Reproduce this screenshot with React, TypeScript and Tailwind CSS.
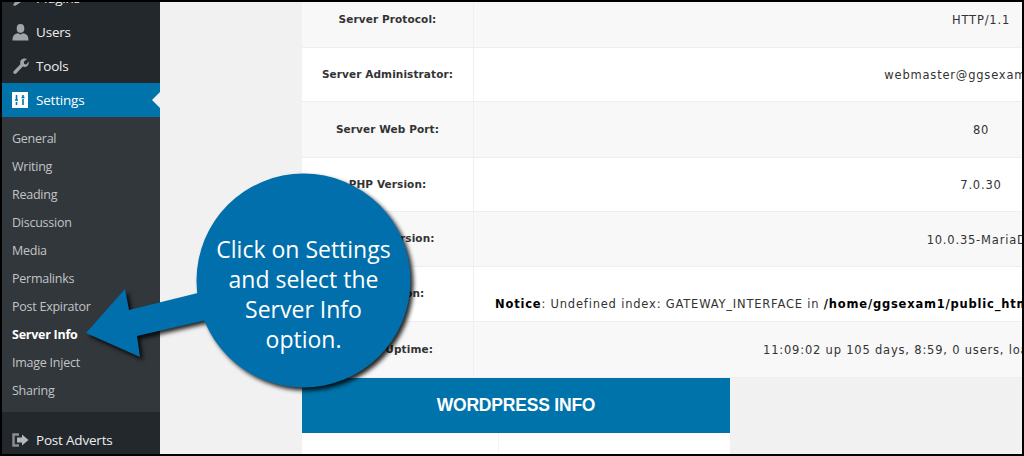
const SUBMENU = ["General", "Writing", "Reading", "Discussion", "Media", "Permalinks", "Post Expirator", "Server Info", "Image Inject", "Sharing"];

const ROWS = [
  { label: "Server Protocol:", value: "HTTP/1.1", h: "h-[46px]", shaded: true, lift: "-mt-[10px]" },
  { label: "Server Administrator:", value: "webmaster@ggsexample.com", h: "h-[54px]", shaded: false, lift: "" },
  { label: "Server Web Port:", value: "80", h: "h-[56px]", shaded: true, lift: "" },
  { label: "PHP Version:", value: "7.0.30", h: "h-[54px]", shaded: false, lift: "" },
  { label: "MySQL Version:", value: "10.0.35-MariaDB", h: "h-[55px]", shaded: true, lift: "" },
  { label: "CGI Version:", value: "", h: "h-[55px]", shaded: false, lift: "" },
  { label: "Server Uptime:", value: "11:09:02 up 105 days, 8:59, 0 users, load average: 0.35, 0.4, 0.44", h: "h-[56px]", shaded: true, lift: "" },
];

function MenuItem({ icon, label, active }: { icon: React.ReactNode; label: string; active?: boolean }) {
  return (
    <div className={`relative flex h-[34px] items-center text-[13.5px] tracking-[-0.2px] ${active ? "bg-[#0073aa] text-white" : "text-[#eeeeee]"}`}>
      <span className="flex w-[34px] justify-center pl-[2px]">{icon}</span>
      <span>{label}</span>
      {active && (
        <span className="absolute right-0 top-[9px] h-0 w-0 border-y-[8px] border-r-[8px] border-y-transparent border-r-[#f1f1f1]" />
      )}
    </div>
  );
}

function Row({ label, value, h, shaded, lift }: { label: string; value: string; h: string; shaded: boolean; lift: string }) {
  return (
    <div className={`flex shrink-0 border-b border-[#eeeeee] ${h} ${shaded ? "bg-[#f8f8f8]" : "bg-white"}`}>
      <div className="flex w-[172px] shrink-0 items-center justify-center border-r border-[#f0f0f0] text-[10.5px] font-bold tracking-[0.1px] text-[#333333]">
        <span className={lift}>{label}</span>
      </div>
      <div className="flex w-[1014px] shrink-0 items-center justify-center whitespace-nowrap pt-[3px] text-[11.5px] tracking-[0.8px] text-[#333333]">
        {value ? (
          <span className={lift}>{value}</span>
        ) : (
          <span className="mt-[18px] w-full pl-[21px]">
            <b className="text-black">Notice</b>: Undefined index: GATEWAY_INTERFACE in <b className="text-black">/home/ggsexam1/public_html/wp-content/plugins/server-info</b>
          </span>
        )}
      </div>
    </div>
  );
}

export default function App() {
  return (
    <div className="relative flex h-[456px] w-[1024px] overflow-hidden border-2 border-black bg-[#f1f1f1] font-['DejaVu_Sans',sans-serif]">
      {/* admin sidebar */}
      <div className="flex h-full w-[158px] shrink-0 flex-col overflow-hidden bg-[#23282d] font-['Open_Sans',sans-serif]">
        <div className="-mt-[21px]">
          <MenuItem
            label="Plugins"
            icon={
              <svg width="16" height="16" viewBox="0 0 16 16" fill="#a0a5aa">
                <path d="M1 15 L5 9 L9 12 L3 16 Z M8 7 L13 2 L15 4 L11 9 Z" />
              </svg>
            }
          />
          <MenuItem
            label="Users"
            icon={
              <svg width="17" height="17" viewBox="0 0 17 17" fill="#a0a5aa">
                <ellipse cx="8.5" cy="4.5" rx="3.8" ry="4.4" />
                <path d="M0.5 16.5 C0.5 11 2.5 10 6 9.2 L8.5 10.5 L11 9.2 C14.5 10 16.5 11 16.5 16.5 Z" />
              </svg>
            }
          />
          <MenuItem
            label="Tools"
            icon={
              <svg width="17" height="17" viewBox="0 0 17 17" fill="#a0a5aa">
                <path d="M9.2 1.8 C11 0.2 13.6 0.2 15 1 L11.8 3.6 L12.2 6 L14.4 6.6 L16.6 3.6 C17.2 6.4 15.8 8.6 13.4 9 C12.2 9.2 11.4 8.9 10.8 8.6 L4.2 15.6 C3 16.8 0.6 15.4 1.4 13.6 L8.4 6.2 C8 4.6 8.2 2.8 9.2 1.8 Z" />
              </svg>
            }
          />
          <MenuItem
            label="Settings"
            active
            icon={
              <svg width="16" height="16" viewBox="0 0 16 16">
                <rect width="16" height="16" fill="#ffffff" />
                <path d="M4.5 3 V8 M3 8 H6 M4.5 10 V13 M11 3 V5 M9.5 5.5 H12.5 M11 7 V13" stroke="#0073aa" strokeWidth="1.6" fill="none" />
              </svg>
            }
          />
        </div>
        <div className="flex flex-col bg-[#32373c] pb-[7px] pt-[8px] text-[12.5px] tracking-[-0.25px] text-[#c3c4c6]">
          {SUBMENU.map((item) => (
            <div key={item} className={`flex h-[28px] items-center pl-[10px] ${item === "Server Info" ? "font-bold text-white" : ""}`}>
              {item}
            </div>
          ))}
        </div>
        <div className="mt-[11px]">
          <MenuItem
            label="Post Adverts"
            icon={
              <svg width="17" height="16" viewBox="0 0 17 16" fill="none">
                <path d="M7 2.5 H1.5 V13.5 H7" stroke="#8c8f94" strokeWidth="2.4" />
                <path d="M5 5.5 H10 V2.5 L16.5 8 L10 13.5 V10.5 H5 Z" fill="#b4b9be" />
              </svg>
            }
          />
        </div>
      </div>

      {/* server info page */}
      <div className="min-w-0 flex-1 overflow-hidden pl-[142px]">
        <div className="flex w-[1186px] flex-col">
          {ROWS.map((row) => (
            <Row key={row.label} {...row} />
          ))}
        </div>
        <div className="flex h-[55px] w-[428px] items-center justify-center bg-[#0073aa] font-['Liberation_Sans',sans-serif] text-[17.5px] font-bold tracking-[-0.2px] text-white">
          WORDPRESS INFO
        </div>
        <div className="flex h-[21px] w-[428px] bg-white">
          <div className="w-[197px] border-r border-[#f4f4f4]" />
        </div>
      </div>

      {/* callout drawn on top of the screenshot */}
      <svg
        className="absolute -left-[2px] -top-[2px] drop-shadow-[3px_3px_2px_rgba(0,0,0,0.85)]"
        width="1024"
        height="456"
        viewBox="0 0 1024 456"
      >
        <path d="M86 333 L125 289 L129 310 L210 290 L215 318 L137 336 L140 357 Z" fill="#016fab" />
        <circle cx="303.5" cy="280.5" r="107" fill="#016fab" />
      </svg>
      <div className="absolute left-[195px] top-[232px] w-[213px] text-center font-['Open_Sans',sans-serif] text-[23px] leading-[30px] text-white">
        Click on Settings
        <br />
        and select the
        <br />
        Server Info
        <br />
        option.
      </div>
    </div>
  );
}
